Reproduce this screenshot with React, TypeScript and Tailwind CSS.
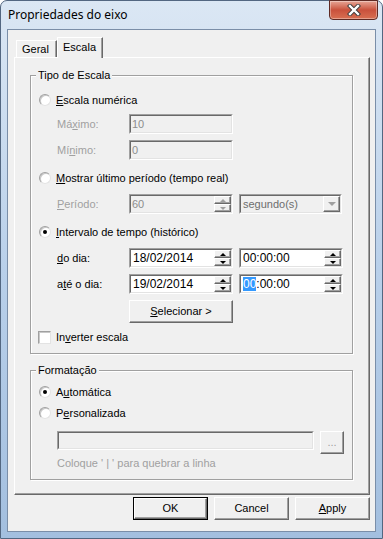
import React from 'react';

// classic 3D edges
const RAISED = 'border border-white border-b-[#696969] border-r-[#696969] bg-[#f0f0f0] shadow-[inset_-1px_-1px_0_#a0a0a0]';

function Sunken({ className = '', disabled = false, children }: { className?: string; disabled?: boolean; children?: React.ReactNode }) {
  return (
    <div className={`border border-[#a0a0a0] border-b-white border-r-white ${className}`}>
      <div className={`flex h-full items-center border border-[#696969] border-b-[#e3e3e3] border-r-[#e3e3e3] ${disabled ? 'bg-[#f0f0f0]' : 'bg-white'}`}>
        {children}
      </div>
    </div>
  );
}

function Spin({ disabled = false }: { disabled?: boolean }) {
  return (
    <div className="ml-auto flex h-full w-[17px] flex-col">
      <div className={`flex flex-1 items-center justify-center ${RAISED}`}>
        <span className={`h-0 w-0 border-x-[3px] border-b-[3px] border-x-transparent ${disabled ? 'border-b-[#a0a0a0]' : 'border-b-black'}`} />
      </div>
      <div className={`flex flex-1 items-center justify-center ${RAISED}`}>
        <span className={`h-0 w-0 border-x-[3px] border-t-[3px] border-x-transparent ${disabled ? 'border-t-[#a0a0a0]' : 'border-t-black'}`} />
      </div>
    </div>
  );
}

function Radio({ checked = false }: { checked?: boolean }) {
  return (
    <span className="flex h-[12px] w-[12px] shrink-0 items-center justify-center rounded-full border border-[#a0a0a0] border-b-[#e3e3e3] border-r-[#e3e3e3] bg-white shadow-[inset_1px_1px_0_#c8c8c8]">
      {checked && <span className="h-[4px] w-[4px] rounded-full bg-black" />}
    </span>
  );
}

function Button({ children, def = false, className = '' }: { children: React.ReactNode; def?: boolean; className?: string }) {
  return (
    <div className={`${def ? 'border border-black' : ''} ${className}`}>
      <div className={`flex h-full items-center justify-center ${RAISED}`}>{children}</div>
    </div>
  );
}

function Group({ title, className = '', children }: { title: string; className?: string; children: React.ReactNode }) {
  return (
    <div className={`relative w-[323px] border border-[#a0a0a0] shadow-[inset_1px_1px_0_#fff,1px_1px_0_#fff] ${className}`}>
      <span className="absolute -top-[8px] left-[5px] bg-[#f0f0f0] px-[2px] leading-[14px]">{title}</span>
      <div className="flex flex-col pl-[8px]">{children}</div>
    </div>
  );
}

export default function App() {
  return (
    <div className="h-[539px] w-[383px] bg-white font-['Liberation_Sans',Arial,sans-serif] text-[11px] text-black">
      <div className="flex h-full flex-col rounded-t-[7px] border border-[#536781] bg-gradient-to-b from-[#dbe7f4] via-[#b9d0ea] to-[#a3bfdf] px-[6px] pb-[6px]">
        {/* title bar */}
        <div className="flex h-[28px] items-start">
          <div className="pl-[1px] pt-[6px] font-['Noto_Sans',sans-serif] text-[12px] leading-[16px]">Propriedades do eixo</div>
          <div className="-mr-[2px] -mt-[1px] ml-auto flex h-[20px] w-[49px] items-center justify-center rounded-b-[4px] border border-[#5e2a24] bg-gradient-to-b from-[#e6a596] via-[#c9513c] to-[#d86f52] shadow-[inset_0_0_0_1px_rgba(255,255,255,0.35)]">
            <svg width="14" height="12" viewBox="0 0 14 12">
              <path d="M3 2 L11 10 M11 2 L3 10" stroke="#3a3a3a" strokeWidth="4.2" strokeLinecap="square" />
              <path d="M3 2 L11 10 M11 2 L3 10" stroke="#ffffff" strokeWidth="2.4" strokeLinecap="square" />
            </svg>
          </div>
        </div>

        {/* client area */}
        <div className="flex flex-1 flex-col border border-[#7a8ea8] bg-[#f0f0f0]">
          <div className="flex flex-col pl-[6px] pt-[7px]">
            {/* tabs */}
            <div className="flex h-[20px] items-end">
              <div className="ml-[2px] flex h-[17px] w-[41px] items-center border-l border-t border-white border-r-[#696969] pl-[5px] shadow-[inset_-1px_0_0_#a0a0a0] border-r">
                Geral
              </div>
              <div className="relative z-10 -mb-px flex h-[21px] w-[46px] items-center border-l border-r border-t border-white border-r-[#696969] bg-[#f0f0f0] pl-[5px] pb-[2px] shadow-[inset_-1px_0_0_#a0a0a0]">
                Escala
              </div>
            </div>

            {/* tab panel */}
            <div className="h-[438px] w-[356px] border border-white border-b-[#696969] border-r-[#696969] pl-[15px] pt-[17px] shadow-[inset_-1px_-1px_0_#a0a0a0]">
              <Group title="Tipo de Escala" className="h-[279px]">
                <div className="mt-[16px] flex h-[16px] items-center gap-[5px]">
                  <Radio />
                  <span><u>E</u>scala numérica</span>
                </div>
                <div className="mt-[6px] flex items-center pl-[18px]">
                  <span className="w-[72px] text-[#a0a0a0]">Má<u>x</u>imo:</span>
                  <Sunken disabled className="h-[20px] w-[104px]">
                    <span className="pl-[1px] text-[#8d8d8d]">10</span>
                  </Sunken>
                </div>
                <div className="mt-[6px] flex items-center pl-[18px]">
                  <span className="w-[72px] text-[#a0a0a0]">Mí<u>n</u>imo:</span>
                  <Sunken disabled className="h-[20px] w-[104px]">
                    <span className="pl-[1px] text-[#8d8d8d]">0</span>
                  </Sunken>
                </div>
                <div className="mt-[10px] flex h-[16px] items-center gap-[5px]">
                  <Radio />
                  <span><u>M</u>ostrar último período (tempo real)</span>
                </div>
                <div className="mt-[8px] flex items-center pl-[18px]">
                  <span className="w-[72px] text-[#a0a0a0]"><u>P</u>eríodo:</span>
                  <Sunken disabled className="h-[20px] w-[104px]">
                    <span className="pl-[1px] text-[#8d8d8d]">60</span>
                    <Spin disabled />
                  </Sunken>
                  <Sunken disabled className="ml-[6px] h-[20px] w-[103px]">
                    <span className="pl-[2px] text-[#6d6d6d]">segundo(s)</span>
                    <div className={`ml-auto flex h-full w-[17px] items-center justify-center ${RAISED}`}>
                      <span className="h-0 w-0 border-x-[4px] border-t-[4px] border-x-transparent border-t-[#a0a0a0]" />
                    </div>
                  </Sunken>
                </div>
                <div className="mt-[10px] flex h-[16px] items-center gap-[5px]">
                  <Radio checked />
                  <span><u>I</u>ntervalo de tempo (histórico)</span>
                </div>
                <div className="mt-[8px] flex items-center pl-[18px]">
                  <span className="w-[72px]"><u>d</u>o dia:</span>
                  <Sunken className="h-[20px] w-[104px]">
                    <span className="pl-[2px] text-[12px]">18/02/2014</span>
                    <Spin />
                  </Sunken>
                  <Sunken className="ml-[6px] h-[20px] w-[104px]">
                    <span className="pl-[2px] text-[12px]">00:00:00</span>
                    <Spin />
                  </Sunken>
                </div>
                <div className="mt-[6px] flex items-center pl-[18px]">
                  <span className="w-[72px]">a<u>t</u>é o dia:</span>
                  <Sunken className="h-[20px] w-[104px]">
                    <span className="pl-[2px] text-[12px]">19/02/2014</span>
                    <Spin />
                  </Sunken>
                  <Sunken className="ml-[6px] h-[20px] w-[104px]">
                    <span className="pl-[2px] text-[12px]">
                      <span className="bg-[#3399ff] text-white">00</span>:00:00
                    </span>
                    <Spin />
                  </Sunken>
                </div>
                <Button className="ml-[90px] mt-[6px] h-[23px] w-[104px]">
                  <span><u>S</u>elecionar &gt;</span>
                </Button>
                <div className="-ml-px mt-[6px] flex h-[16px] items-center gap-[5px]">
                  <span className="h-[13px] w-[13px] border border-[#a0a0a0] border-b-[#e3e3e3] border-r-[#e3e3e3] bg-white shadow-[inset_1px_1px_0_#c8c8c8]" />
                  <span>In<u>v</u>erter escala</span>
                </div>
              </Group>

              <Group title="Formatação" className="mt-[16px] h-[110px]">
                <div className="mt-[13px] flex h-[16px] items-center gap-[5px]">
                  <Radio checked />
                  <span>A<u>u</u>tomática</span>
                </div>
                <div className="mt-[5px] flex h-[16px] items-center gap-[5px]">
                  <Radio />
                  <span>P<u>e</u>rsonalizada</span>
                </div>
                <div className="mt-[10px] flex items-start pl-[18px]">
                  <Sunken disabled className="h-[19px] w-[257px]" />
                  <Button className="ml-[6px] h-[23px] w-[24px]">
                    <span className="text-[#a0a0a0]">...</span>
                  </Button>
                </div>
                <div className="mt-[2px] pl-[18px] leading-[14px] text-[#a0a0a0]">Coloque ' | ' para quebrar a linha</div>
              </Group>
            </div>

            {/* dialog buttons */}
            <div className="mt-[2px] flex justify-end gap-[6px] pr-[5px]">
              <Button def className="h-[23px] w-[75px]">OK</Button>
              <Button className="h-[23px] w-[75px]">Cancel</Button>
              <Button className="h-[23px] w-[75px]"><span><u>A</u>pply</span></Button>
            </div>
          </div>
        </div>
      </div>
    </div>
  );
}
